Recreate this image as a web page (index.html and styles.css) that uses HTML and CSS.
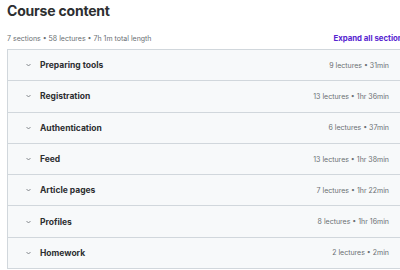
FILE: index.html
```html
<!DOCTYPE html>
<html lang="en">
<head>
    <meta charset="UTF-8">
    <meta name="viewport" content="width=device-width, initial-scale=1.0">
    <title>Course content</title>
    <link rel="stylesheet" href="styles.css">
</head>
<body>
    <div class="course">
        <h2 class="title">Course content</h2>
        <div class="meta">
            <span>7 sections • 58 lectures • 7h 1m total length</span>
            <span class="expand">Expand all sections</span>
        </div>
        <div class="sections">
            <div class="section">
                <span class="chevron"><svg width="5" height="4" viewBox="0 0 5 4"><path d="M0.5 1 L2.5 3 L4.5 1" fill="none" stroke="#6a6f73" stroke-width="0.8"/></svg></span>
                <span class="name">Preparing tools</span>
                <span class="info">9 lectures • 31min</span>
            </div>
            <div class="section">
                <span class="chevron"><svg width="5" height="4" viewBox="0 0 5 4"><path d="M0.5 1 L2.5 3 L4.5 1" fill="none" stroke="#6a6f73" stroke-width="0.8"/></svg></span>
                <span class="name">Registration</span>
                <span class="info">13 lectures • 1hr 36min</span>
            </div>
            <div class="section">
                <span class="chevron"><svg width="5" height="4" viewBox="0 0 5 4"><path d="M0.5 1 L2.5 3 L4.5 1" fill="none" stroke="#6a6f73" stroke-width="0.8"/></svg></span>
                <span class="name">Authentication</span>
                <span class="info">6 lectures • 37min</span>
            </div>
            <div class="section">
                <span class="chevron"><svg width="5" height="4" viewBox="0 0 5 4"><path d="M0.5 1 L2.5 3 L4.5 1" fill="none" stroke="#6a6f73" stroke-width="0.8"/></svg></span>
                <span class="name">Feed</span>
                <span class="info">13 lectures • 1hr 38min</span>
            </div>
            <div class="section">
                <span class="chevron"><svg width="5" height="4" viewBox="0 0 5 4"><path d="M0.5 1 L2.5 3 L4.5 1" fill="none" stroke="#6a6f73" stroke-width="0.8"/></svg></span>
                <span class="name">Article pages</span>
                <span class="info">7 lectures • 1hr 22min</span>
            </div>
            <div class="section">
                <span class="chevron"><svg width="5" height="4" viewBox="0 0 5 4"><path d="M0.5 1 L2.5 3 L4.5 1" fill="none" stroke="#6a6f73" stroke-width="0.8"/></svg></span>
                <span class="name">Profiles</span>
                <span class="info">8 lectures • 1hr 16min</span>
            </div>
            <div class="section">
                <span class="chevron"><svg width="5" height="4" viewBox="0 0 5 4"><path d="M0.5 1 L2.5 3 L4.5 1" fill="none" stroke="#6a6f73" stroke-width="0.8"/></svg></span>
                <span class="name">Homework</span>
                <span class="info">2 lectures • 2min</span>
            </div>
        </div>
    </div>
</body>
</html>
```

FILE: styles.css
```css
body {
    margin: 0;
    padding: 0 0 0 7px;
    font-family: Inter, "Liberation Sans", sans-serif;
    color: #2d2f31;
    background: #fff;
    overflow: hidden;
}

.course {
    width: 400px;
}

.title {
    margin: 0;
    padding-top: 1px;
    font-size: 14px;
    font-weight: 700;
    line-height: 20px;
    letter-spacing: -0.2px;
}

.meta {
    display: flex;
    justify-content: space-between;
    align-items: center;
    margin-top: 9px;
    height: 16px;
    font-size: 7px;
    color: #6a6f73;
}

.expand {
    color: #5624d0;
    font-weight: 700;
    font-size: 7.8px;
}

.sections {
    margin-top: 3px;
    border: 1px solid #d1d7dc;
    border-right: none;
}

.section {
    display: flex;
    align-items: center;
    height: 30.3px;
    padding: 0 18px 0 18px;
    background: #f7f9fa;
    border-top: 1px solid #d1d7dc;
}

.section:first-child {
    border-top: none;
}

.chevron {
    display: flex;
    width: 14px;
}

.name {
    font-size: 8.5px;
    font-weight: 700;
    flex: 1;
}

.info {
    font-size: 7px;
    color: #6a6f73;
}
```
